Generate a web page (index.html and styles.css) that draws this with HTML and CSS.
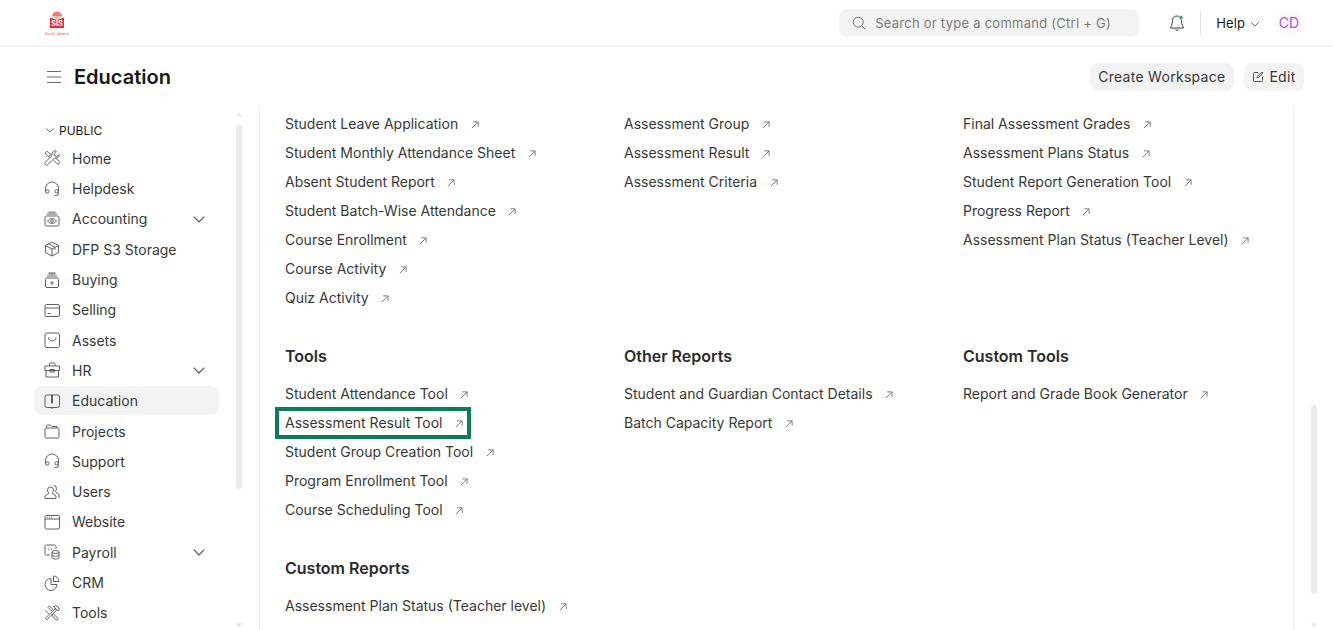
FILE: index.html
```html
<!DOCTYPE html>
<html lang="en">
<head>
<meta charset="utf-8">
<title>Education</title>
<link rel="stylesheet" href="styles.css">
</head>
<body>
<svg class="sprites" width="0" height="0" aria-hidden="true">
  <symbol id="arrow" viewBox="0 0 9 9"><path d="M1 8 8 1M2.500 1H8v5.500"/></symbol>
  <symbol id="chev" viewBox="0 0 12 12"><path d="M1.500 4 6 8.500 10.500 4"/></symbol>
  <symbol id="headset" viewBox="0 0 16 16"><path d="M1.500 10V7.500a6.500 6.500 0 0 1 13 0V10"/><path d="M1.500 10.500a1.700 1.700 0 1 0 3.400 0 1.700 1.700 0 0 0-3.400 0zM1.500 10.500V8.800M14.300 10.300a1.700 1.700 0 1 1-3.400 0 1.700 1.700 0 0 1 3.400 0zM14.300 10.300v2.700a1.500 1.500 0 0 1-1.500 1.500H10.500"/></symbol>
</svg>

<header class="navbar">
  <svg class="logo" viewBox="0 0 24 26" width="24" height="26">
    <path class="logo-dome" d="M7 6.500a5 5 0 0 1 10 0z"/>
    <path class="logo-leaf" d="M8.500 6.500h7l-3.500 3z"/>
    <path class="logo-book" d="M5 7.500l7 2.500 7-2.500V18H5z"/>
    <text class="logo-mark" x="12" y="16" text-anchor="middle">SIS</text>
    <text class="logo-tag" x="12" y="25" text-anchor="middle">South Jakarta</text>
  </svg>
  <div class="nav-right">
    <div class="search">
      <svg class="search-icon" viewBox="0 0 14 14" width="14" height="14"><circle cx="6.200" cy="6.200" r="5"/><path d="m10 10 3 3"/></svg>
      <span>Search or type a command (Ctrl + G)</span>
    </div>
    <svg class="bell" viewBox="0 0 16 18" width="16" height="18"><path d="M8 2a4.500 4.500 0 0 0-4.500 4.500c0 4-1.500 6-2 7.500h13c-.5-1.500-2-3.500-2-7.500A4.500 4.500 0 0 0 8 2zM6.300 15.500c.4 1 3 1 3.400 0"/><circle class="bell-dot" cx="12" cy="3.500" r="2"/></svg>
    <span class="nav-divider"></span>
    <span class="help">Help</span>
    <svg class="help-chev icon-line" width="10" height="10"><use href="#chev"/></svg>
    <span class="avatar">CD</span>
  </div>
</header>

<section class="page-head">
  <svg class="hamburger" viewBox="0 0 14 14" width="14" height="14"><path d="M0 1.500h14M0 7h14M0 12.500h14"/></svg>
  <h1>Education</h1>
  <div class="actions">
    <button class="btn">Create Workspace</button>
    <button class="btn btn-edit"><svg class="edit-icon" viewBox="0 0 12 12" width="12" height="12"><path d="M6 1.500H2.500a1 1 0 0 0-1 1v7a1 1 0 0 0 1 1h7a1 1 0 0 0 1-1V6M5 7l.4-1.600L10 1l1 1-4.500 4.600z"/></svg>Edit</button>
  </div>
</section>

<div class="workspace">
  <aside class="sidebar">
    <nav class="side-nav">
      <div class="side-label"><svg class="icon-line label-chev" width="10" height="10"><use href="#chev"/></svg>PUBLIC</div>

      <a class="side-item"><svg class="side-icon" viewBox="0 0 16 16"><path d="M11.500.7a3.700 3.700 0 0 0-3.500 4.900L1.300 12.200a1.700 1.700 0 0 0 2.500 2.500l6.600-6.700A3.700 3.700 0 0 0 15.300 4.500l-2.300 2-2.300-.7-.6-2.300 2.200-2.300z"/><path d="M1 3.200 3 1.200l3.300 3.300-.3 1.600-1.700.3zM9.600 10.200l3.200 3.400a1.600 1.600 0 0 0 2.300-2.300L11.700 8"/></svg>Home</a>
      <a class="side-item"><svg class="side-icon"><use href="#headset"/></svg>Helpdesk</a>
      <a class="side-item"><svg class="side-icon" viewBox="0 0 16 16"><rect x="1" y="5" width="14" height="10" rx="1.500"/><path d="M3 3h10M4.500 1.200h7"/><path d="M3.500 10c2.500-3.200 6.500-3.200 9 0-2.500 3.200-6.500 3.200-9 0z"/><circle cx="8" cy="10" r="1.300"/></svg>Accounting<svg class="item-chev icon-line"><use href="#chev"/></svg></a>
      <a class="side-item"><svg class="side-icon" viewBox="0 0 16 16"><path d="M8 15 1.500 11.500v-7L8 1l6.500 3.500v7zM1.500 4.500 8 8l6.500-3.500M8 8v7M4.500 2.800 11 6.300v2.500"/></svg>DFP S3 Storage</a>
      <a class="side-item"><svg class="side-icon" viewBox="0 0 16 16"><rect x="1.500" y="6" width="13" height="9.500" rx="1.500"/><path d="M3 4h10M4.500 2h7M4.500 1h7"/><circle cx="8" cy="11" r="1.200"/></svg>Buying</a>
      <a class="side-item"><svg class="side-icon" viewBox="0 0 16 16"><rect x="1" y="2.500" width="14.500" height="12" rx="1.500"/><path d="M1 6h14.500M3.500 11.500h3"/></svg>Selling</a>
      <a class="side-item"><svg class="side-icon" viewBox="0 0 16 16"><rect x="1" y="1" width="14.500" height="14.500" rx="2"/><path d="M4.500 5.500c0 4.500 7.500 4.500 7.500 0"/></svg>Assets</a>
      <a class="side-item"><svg class="side-icon" viewBox="0 0 16 16"><path d="M1 4h14.500v4.500H1zM2 8.500V15h12.500V8.500M5.500 4V2a1 1 0 0 1 1-1h3.500a1 1 0 0 1 1 1v2M6 7.500h4.500v2.500H6z"/></svg>HR<svg class="item-chev icon-line"><use href="#chev"/></svg></a>
      <a class="side-item active"><svg class="side-icon" viewBox="0 0 16 16"><rect x="1" y="2" width="14.500" height="12.500" rx="2"/><path d="M7.500 2v8.500M8.500 2v8.500M8 14.500V16"/></svg>Education</a>
      <a class="side-item"><svg class="side-icon" viewBox="0 0 16 16"><path d="M1 6.500A1.500 1.500 0 0 1 2.500 5h11A1.500 1.500 0 0 1 15 6.500v7a1.500 1.500 0 0 1-1.500 1.500h-11A1.500 1.500 0 0 1 1 13.500zM2.500 5V3a1 1 0 0 1 1-1h3l1.500 1.500h5V5"/></svg>Projects</a>
      <a class="side-item"><svg class="side-icon"><use href="#headset"/></svg>Support</a>
      <a class="side-item"><svg class="side-icon" viewBox="0 0 16 16"><path d="M6.500 3a3 3 0 0 0-3 3c0 1.300.6 2.300 1.500 3L1 12v2.500h11V12L8 9c.9-.7 1.500-1.700 1.500-3a3 3 0 0 0-3-3zM9.500 1.500a3 3 0 0 1 3 3.200c0 1.100-.5 2-1.300 2.700L15 10.500V14"/></svg>Users</a>
      <a class="side-item"><svg class="side-icon" viewBox="0 0 16 16"><rect x="1" y="1.500" width="14.500" height="13.500" rx="1.500"/><path d="M1 5h14.500"/><path class="dots" d="M3 3.300h.8M5 3.300h.8M7 3.300h.8"/></svg>Website</a>
      <a class="side-item"><svg class="side-icon" viewBox="0 0 16 16"><path d="M6 11H2.500A1.500 1.500 0 0 1 1 9.500v-7A1.500 1.500 0 0 1 2.500 1h8A1.500 1.500 0 0 1 12 2.500V5"/><path d="M4 5h1M7 5.500h1"/><ellipse cx="11.500" cy="8" rx="3.500" ry="1.500"/><path d="M8 8v5.500c0 .8 1.600 1.500 3.500 1.500s3.500-.7 3.500-1.500V8M8 10.800c0 .8 1.600 1.500 3.500 1.500s3.500-.7 3.500-1.500"/></svg>Payroll<svg class="item-chev icon-line"><use href="#chev"/></svg></a>
      <a class="side-item"><svg class="side-icon" viewBox="0 0 16 16"><path d="M7 3.500a6 6 0 1 0 6 6H7zM9.500 1v5.500H15A5.500 5.500 0 0 0 9.500 1z"/></svg>CRM</a>
      <a class="side-item"><svg class="side-icon" viewBox="0 0 16 16"><path d="M1.300 13.300l1.500 1.500L12.500 5.200l-1.500-1.500zM5.500 1l3.300 3.300-1.500 1.500L4 2.500zM9.500 1.500 14 6l1.300-1-1-3-2.800-1.200zM4.800 9 1 5.200M9 8.500l5.300 5.300-1.500 1.500-5.300-5.300z"/></svg>Tools</a>
    </nav>
    <div class="scroll-track side-track">
      <i class="tri tri-up"></i>
      <i class="thumb side-thumb"></i>
      <i class="tri tri-down"></i>
    </div>
  </aside>

  <main class="main">
    <div class="link-grid">
      <ul class="links">
        <li><a>Student Leave Application<svg class="arrow"><use href="#arrow"/></svg></a></li>
        <li><a>Student Monthly Attendance Sheet<svg class="arrow"><use href="#arrow"/></svg></a></li>
        <li><a>Absent Student Report<svg class="arrow"><use href="#arrow"/></svg></a></li>
        <li><a>Student Batch-Wise Attendance<svg class="arrow"><use href="#arrow"/></svg></a></li>
        <li><a>Course Enrollment<svg class="arrow"><use href="#arrow"/></svg></a></li>
        <li><a>Course Activity<svg class="arrow"><use href="#arrow"/></svg></a></li>
        <li><a>Quiz Activity<svg class="arrow"><use href="#arrow"/></svg></a></li>
      </ul>
      <ul class="links">
        <li><a>Assessment Group<svg class="arrow"><use href="#arrow"/></svg></a></li>
        <li><a>Assessment Result<svg class="arrow"><use href="#arrow"/></svg></a></li>
        <li><a>Assessment Criteria<svg class="arrow"><use href="#arrow"/></svg></a></li>
      </ul>
      <ul class="links">
        <li><a>Final Assessment Grades<svg class="arrow"><use href="#arrow"/></svg></a></li>
        <li><a>Assessment Plans Status<svg class="arrow"><use href="#arrow"/></svg></a></li>
        <li><a>Student Report Generation Tool<svg class="arrow"><use href="#arrow"/></svg></a></li>
        <li><a>Progress Report<svg class="arrow"><use href="#arrow"/></svg></a></li>
        <li><a>Assessment Plan Status (Teacher Level)<svg class="arrow"><use href="#arrow"/></svg></a></li>
      </ul>

      <section class="group">
        <h2>Tools</h2>
        <ul class="links">
          <li><a>Student Attendance Tool<svg class="arrow"><use href="#arrow"/></svg></a></li>
          <li><a class="highlight">Assessment Result Tool<svg class="arrow"><use href="#arrow"/></svg></a></li>
          <li><a>Student Group Creation Tool<svg class="arrow"><use href="#arrow"/></svg></a></li>
          <li><a>Program Enrollment Tool<svg class="arrow"><use href="#arrow"/></svg></a></li>
          <li><a>Course Scheduling Tool<svg class="arrow"><use href="#arrow"/></svg></a></li>
        </ul>
      </section>
      <section class="group">
        <h2>Other Reports</h2>
        <ul class="links">
          <li><a>Student and Guardian Contact Details<svg class="arrow"><use href="#arrow"/></svg></a></li>
          <li><a>Batch Capacity Report<svg class="arrow"><use href="#arrow"/></svg></a></li>
        </ul>
      </section>
      <section class="group">
        <h2>Custom Tools</h2>
        <ul class="links">
          <li><a>Report and Grade Book Generator<svg class="arrow"><use href="#arrow"/></svg></a></li>
        </ul>
      </section>

      <section class="group">
        <h2>Custom Reports</h2>
        <ul class="links">
          <li><a>Assessment Plan Status (Teacher level)<svg class="arrow"><use href="#arrow"/></svg></a></li>
        </ul>
      </section>
    </div>
  </main>

  <div class="scroll-track main-track">
    <i class="thumb main-thumb"></i>
    <i class="tri tri-down"></i>
  </div>
</div>
</body>
</html>
```

FILE: styles.css
```css
* { box-sizing: border-box; }

html, body {
  margin: 0;
  height: 630px;
  overflow: hidden;
  background: #fff;
  font-family: Inter, "Liberation Sans", sans-serif;
  font-size: 14px;
  color: #383838;
}

.sprites { position: absolute; }

svg { fill: none; stroke: #525252; stroke-width: 1; }

.icon-line { stroke: #525252; }

/* Navbar */
.navbar {
  height: 47px;
  border-bottom: 1px solid #ededed;
  display: flex;
  align-items: center;
  padding: 0 30px 0 45px;
}

.logo { stroke: none; margin-top: -1px; }
.logo-dome { fill: #f47a7a; stroke: none; }
.logo-leaf { fill: #f5b3a0; stroke: none; }
.logo-book { fill: #e62b2b; stroke: none; }
.logo-mark { fill: #fff; stroke: none; font-size: 7.500px; font-weight: 700; }
.logo-tag { fill: #e85050; stroke: none; font-size: 3.600px; }

.nav-right { margin-left: auto; display: flex; align-items: center; margin-top: -1px; }

.search {
  width: 300px;
  height: 28px;
  border-radius: 8px;
  background: #f3f3f3;
  display: flex;
  align-items: center;
  padding-left: 13px;
  gap: 9px;
  color: #7c7c7c;
  font-size: 13px;
  letter-spacing: 0.02em;
}

.search-icon { stroke: #6f6f6f; }

.bell { margin-left: 30px; stroke: #404040; }
.bell-dot { fill: #28a068; stroke: #fff; stroke-width: 0.500; }

.nav-divider { width: 1px; height: 24px; background: #e2e2e2; margin-left: 15px; }

.help { margin-left: 15px; font-size: 13px; color: #171717; letter-spacing: 0.01em; }
.help-chev { margin-left: 5px; margin-top: 2px; }

.avatar {
  width: 28px;
  height: 28px;
  border-radius: 50%;
  margin-left: 15px;
  background: #fcf8ff;
  color: #a855e8;
  display: flex;
  align-items: center;
  justify-content: center;
  font-size: 14px;
}

/* Page head */
.page-head {
  height: 60px;
  display: flex;
  align-items: center;
  padding: 0 29px 0 47px;
}

.hamburger { stroke: #6b6b6b; }

h1 {
  margin: 0 0 0 13px;
  font-size: 20px;
  font-weight: 600;
  color: #171717;
}

.actions { margin-left: auto; display: flex; gap: 10px; margin-top: -1px; }

.btn {
  height: 28px;
  padding: 0 8.500px;
  border: 0;
  border-radius: 8px;
  background: #f3f3f3;
  color: #383838;
  font: inherit;
  letter-spacing: 0.02em;
  display: flex;
  align-items: center;
}

.edit-icon { margin-right: 5px; }

/* Workspace */
.workspace { display: flex; height: 523px; }

.sidebar {
  width: 260px;
  border-right: 1px solid #ededed;
  display: flex;
  flex: none;
}

.side-nav { width: 236px; padding: 13.400px 0 0 34px; }

.side-label {
  height: 20px;
  display: flex;
  align-items: center;
  gap: 4px;
  padding-left: 11px;
  margin-bottom: 3.500px;
  font-size: 12px;
  color: #171717;
}

.side-item {
  width: 185px;
  height: 29px;
  margin-bottom: 1.300px;
  padding-left: 10px;
  border-radius: 8px;
  display: flex;
  align-items: center;
  gap: 12px;
  white-space: nowrap;
}

.side-item.active { background: #f3f3f3; }

.side-icon { width: 16px; height: 16px; flex: none; stroke: #616161; }
.dots { stroke-width: 1.200; }

.item-chev { width: 14px; height: 14px; margin-left: auto; margin-right: 13px; }

/* Scrollbars */
.scroll-track {
  width: 6px;
  display: flex;
  flex-direction: column;
  align-items: center;
}

.thumb {
  width: 6px;
  background: #ebebeb;
  border-radius: 3px;
  display: block;
}

.tri { width: 0; height: 0; border-left: 3.500px solid transparent; border-right: 3.500px solid transparent; display: block; }
.tri-up { border-bottom: 5px solid #ebebeb; margin-top: 5px; }
.tri-down { border-top: 5px solid #ebebeb; margin-top: auto; margin-bottom: 2px; }

.side-thumb { height: 365px; margin-top: 7px; }

.main-track { margin-left: 17px; }
.main-thumb { height: 189px; margin-top: 298px; }

/* Main */
.main {
  width: 1034px;
  flex: none;
  border-right: 1px solid #ededed;
  padding: 2px 0 0 25px;
  overflow: hidden;
}

.link-grid {
  display: grid;
  grid-template-columns: repeat(3, 339px);
  align-items: start;
}

.links { list-style: none; margin: 0; padding: 0; }

.links li { height: 29px; display: flex; align-items: center; }

.links a { display: flex; align-items: center; position: relative; white-space: nowrap; }

.arrow { width: 8px; height: 8px; margin-left: 12.500px; margin-top: 2px; stroke: #707070; flex: none; }

.group { margin-top: 31.500px; }

h2 {
  margin: 0 0 11.500px;
  height: 24px;
  line-height: 24px;
  font-size: 16px;
  font-weight: 600;
  color: #2b2b2b;
}

.highlight::after {
  content: "";
  position: absolute;
  left: -10px;
  right: -8.500px;
  top: -7px;
  bottom: -8px;
  border: 4px solid #0b7d5a;
}
```
